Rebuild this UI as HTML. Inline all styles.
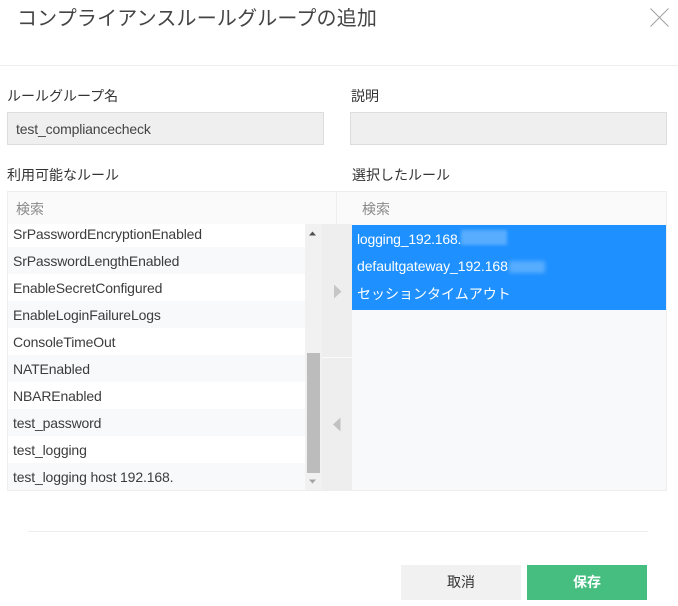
<!DOCTYPE html>
<html lang="ja">
<head>
<meta charset="utf-8">
<style>
html,body{margin:0;padding:0;background:#fff;}
body{width:678px;height:606px;position:relative;overflow:hidden;font-family:"Liberation Sans","Noto Sans CJK JP",sans-serif;color:#333;}
.a{position:absolute;white-space:nowrap;}
.row{position:absolute;left:8px;width:297px;height:27px;line-height:27px;font-size:14px;letter-spacing:-.15px;color:#3c3c3c;}
.row span{position:absolute;left:5px;top:1px;}
.odd{background:#fff;}
.even{background:#f8f9fb;}
.lbl{font-size:14px;line-height:20px;color:#333;}
.sel{font-size:14px;color:#fff;line-height:20px;letter-spacing:-.2px;}
</style>
</head>
<body>
<div class="a" style="left:17px;top:4px;font-size:20px;line-height:30px;letter-spacing:.17px;color:#444;">コンプライアンスルールグループの追加</div>
<svg class="a" style="left:649px;top:7px;" width="21" height="21" viewBox="0 0 21 21"><path d="M1.5 1.5L19.5 19.5M19.5 1.5L1.5 19.5" stroke="#a0a0a0" stroke-width="1" fill="none"/></svg>
<div class="a" style="left:0;top:65px;width:678px;height:1px;background:#eee;"></div>

<div class="a lbl" style="left:7px;top:86px;">ルールグループ名</div>
<div class="a lbl" style="left:351px;top:86px;">説明</div>
<div class="a" style="left:7px;top:112px;width:315px;height:31px;background:#efefef;border:1px solid #ddd;"></div>
<div class="a" style="left:16px;top:120px;font-size:14px;line-height:18px;color:#444;letter-spacing:-.15px;">test_compliancecheck</div>
<div class="a" style="left:350px;top:112px;width:315px;height:31px;background:#efefef;border:1px solid #ddd;"></div>

<div class="a lbl" style="left:7px;top:165px;">利用可能なルール</div>
<div class="a lbl" style="left:352px;top:165px;">選択したルール</div>

<div class="a" style="left:7px;top:191px;width:658px;height:298px;border:1px solid #eee;background:#f8f9fb;"></div>
<div class="a" style="left:8px;top:192px;width:658px;height:32px;background:#fafafa;"></div>
<div class="a" style="left:336px;top:192px;width:1px;height:32px;background:#eee;"></div>
<div class="a" style="left:16px;top:199px;font-size:14px;line-height:20px;color:#8a8a8a;">検索</div>
<div class="a" style="left:362px;top:199px;font-size:14px;line-height:20px;color:#8a8a8a;">検索</div>

<div class="row odd" style="top:224px;height:23px;"><span style="top:-3px;">SrPasswordEncryptionEnabled</span></div>
<div class="row even" style="top:247px;"><span>SrPasswordLengthEnabled</span></div>
<div class="row odd" style="top:274px;"><span>EnableSecretConfigured</span></div>
<div class="row even" style="top:301px;"><span>EnableLoginFailureLogs</span></div>
<div class="row odd" style="top:328px;"><span>ConsoleTimeOut</span></div>
<div class="row even" style="top:355px;"><span>NATEnabled</span></div>
<div class="row odd" style="top:382px;"><span>NBAREnabled</span></div>
<div class="row even" style="top:409px;"><span>test_password</span></div>
<div class="row odd" style="top:436px;"><span>test_logging</span></div>
<div class="row even" style="top:463px;"><span>test_logging host 192.168.</span></div>

<div class="a" style="left:305px;top:224px;width:17px;height:266px;background:#f1f1f1;"></div>
<div class="a" style="left:307px;top:353px;width:13px;height:120px;background:#bcbcbc;"></div>
<svg class="a" style="left:309px;top:231px;" width="8" height="5"><path d="M0 4.5L3.5 0.5L7 4.5Z" fill="#505050"/></svg>
<svg class="a" style="left:309px;top:479px;" width="8" height="5"><path d="M0 0.5L7 0.5L3.5 4.5Z" fill="#a3a3a3"/></svg>

<div class="a" style="left:322px;top:224px;width:30px;height:266px;background:#eee;"></div>
<div class="a" style="left:322px;top:357px;width:30px;height:1px;background:#fafafa;"></div>
<svg class="a" style="left:334px;top:284px;" width="8" height="15"><path d="M0 0.5L7.5 7.5L0 14.5Z" fill="#c6c6c6"/></svg>
<svg class="a" style="left:333px;top:417px;" width="8" height="15"><path d="M7.5 0.5L0 7.5L7.5 14.5Z" fill="#c2c2c2"/></svg>

<div class="a" style="left:352px;top:225px;width:314px;height:85px;background:#1e90ff;overflow:hidden;"></div>
<div class="a" style="left:461px;top:230px;width:46px;height:15px;background:#58adff;filter:blur(1.5px);"></div>
<div class="a" style="left:509px;top:261px;width:36px;height:12px;background:#58adff;filter:blur(2px);"></div>
<div class="a sel" style="left:357px;top:229px;">logging_192.168.</div>
<div class="a sel" style="left:357px;top:256px;letter-spacing:-.08px;">defaultgateway_192.168</div>
<div class="a" style="left:357px;top:284px;font-size:14px;line-height:20px;color:#fff;">セッションタイムアウト</div>

<div class="a" style="left:28px;top:531px;width:620px;height:1px;background:#eee;"></div>
<div class="a" style="left:401px;top:565px;width:120px;height:35px;background:#f1f1f1;text-align:center;font-size:14px;line-height:35px;color:#333;">取消</div>
<div class="a" style="left:527px;top:565px;width:120px;height:35px;background:#45be7f;text-align:center;font-size:14px;line-height:35px;color:#fff;font-weight:bold;">保存</div>
</body>
</html>
